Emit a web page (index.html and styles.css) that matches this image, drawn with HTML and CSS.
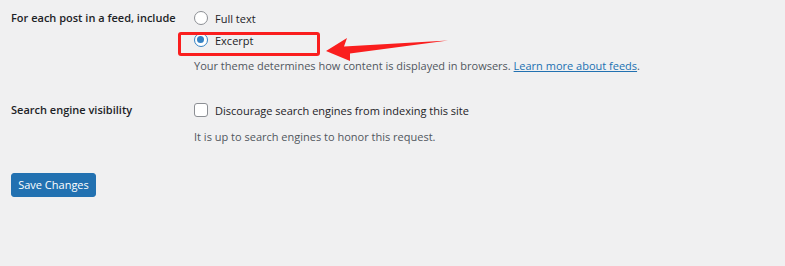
FILE: index.html
```html
<!DOCTYPE html>
<html lang="en">
<head>
<meta charset="utf-8">
<title>Reading Settings</title>
<link rel="stylesheet" href="styles.css">
</head>
<body>
<div class="page">
  <div class="row row-feed">
    <div class="label">For each post in a feed, include</div>
    <div class="field">
      <div class="option"><span class="radio"></span><span>Full text</span></div>
      <div class="option"><span class="radio checked"></span><span>Excerpt</span></div>
      <p class="desc">Your theme determines how content is displayed in browsers. <a href="#">Learn more about feeds</a>.</p>
    </div>
  </div>
  <div class="row row-search">
    <div class="label">Search engine visibility</div>
    <div class="field">
      <div class="option"><span class="checkbox"></span><span>Discourage search engines from indexing this site</span></div>
      <p class="desc desc-2">It is up to search engines to honor this request.</p>
    </div>
  </div>
  <div class="actions"><button class="btn">Save Changes</button></div>
</div>
<div class="highlight"></div>
<svg class="arrow" width="130" height="30" viewBox="320 34 130 30">
  <polygon points="326,51 347,38 344,46.5 448,40.5 350,53.5 350,61" fill="#fa1e1e"/>
</svg>
</body>
</html>
```
FILE: styles.css
```css
html, body {
  margin: 0;
  padding: 0;
  background: #f0f0f1;
}
body {
  font-family: "Open Sans", "Noto Sans", "Liberation Sans", sans-serif;
  font-size: 11px;
  color: #1d2327;
  position: relative;
  width: 785px;
  height: 266px;
  overflow: hidden;
}
.page {
  padding: 7px 11px 0 11px;
}
.row {
  display: grid;
  grid-template-columns: 183px 1fr;
}
.label {
  font-weight: 600;
  line-height: 22px;
}
.option {
  display: flex;
  align-items: center;
  gap: 7px;
  height: 22px;
}
.radio, .checkbox {
  box-sizing: border-box;
  width: 14px;
  height: 14px;
  border: 1px solid #8c8f94;
  background: #fff;
  flex: none;
}
.radio {
  border-radius: 50%;
  position: relative;
}
.radio.checked {
  border: 1.5px solid #3582c4;
}
.radio.checked::after {
  content: "";
  position: absolute;
  left: 1.75px;
  top: 1.75px;
  width: 7.5px;
  height: 7.5px;
  border-radius: 50%;
  background: #3582c4;
}
.checkbox {
  border-radius: 3px;
}
.desc {
  margin: 6px 0 0 0;
  line-height: 18px;
  color: #50575e;
}
.desc a {
  color: #2271b1;
  text-decoration: underline;
}
.row-search {
  margin-top: 24px;
}
.desc-2 {
  margin-top: 7px;
}
.actions {
  margin-top: 27px;
}
.btn {
  font-family: inherit;
  font-size: 11px;
  color: #fff;
  background: #2271b1;
  border: 1px solid #2271b1;
  border-radius: 3px;
  height: 24px;
  width: 85px;
  padding: 0;
  line-height: 22px;
}
.highlight {
  position: absolute;
  left: 178px;
  top: 32px;
  width: 142px;
  height: 24px;
  box-sizing: border-box;
  border: 3px solid #fa1e1e;
  border-radius: 3px;
}
.arrow {
  position: absolute;
  left: 320px;
  top: 34px;
}
```
